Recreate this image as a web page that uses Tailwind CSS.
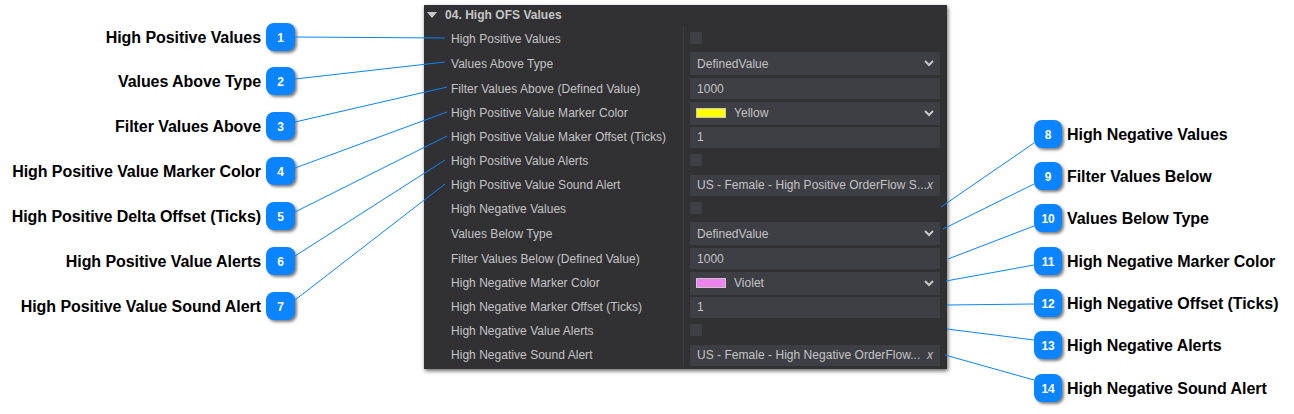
<!DOCTYPE html>
<html lang="en">
<head>
    <meta charset="UTF-8">
    <title>High OFS Values</title>
    <script src="https://cdn.jsdelivr.net/npm/@tailwindcss/browser@4"></script>
</head>
<body class="bg-white font-['Liberation_Sans',Arial,sans-serif]">
    <div class="relative w-[1294px] h-[414px] overflow-hidden flex">

        <!-- Left callouts -->
        <div class="w-[295px] pt-[22.6px] flex flex-col gap-[16.83px] items-end text-[16px] font-bold text-black tracking-[-0.06px]">
            <div class="flex items-center gap-[5px] h-[28px]"><span class="mt-[2px]">High Positive Values</span><span class="w-[29px] h-[28px] pt-[2px] rounded-lg bg-[#0a84ff] text-white text-[12px] flex items-center justify-center shadow-[2px_2px_3px_rgba(0,0,0,0.5)]">1</span></div>
            <div class="flex items-center gap-[5px] h-[28px]"><span class="mt-[2px]">Values Above Type</span><span class="w-[29px] h-[28px] pt-[2px] rounded-lg bg-[#0a84ff] text-white text-[12px] flex items-center justify-center shadow-[2px_2px_3px_rgba(0,0,0,0.5)]">2</span></div>
            <div class="flex items-center gap-[5px] h-[28px]"><span class="mt-[2px]">Filter Values Above</span><span class="w-[29px] h-[28px] pt-[2px] rounded-lg bg-[#0a84ff] text-white text-[12px] flex items-center justify-center shadow-[2px_2px_3px_rgba(0,0,0,0.5)]">3</span></div>
            <div class="flex items-center gap-[5px] h-[28px]"><span class="mt-[2px]">High Positive Value Marker Color</span><span class="w-[29px] h-[28px] pt-[2px] rounded-lg bg-[#0a84ff] text-white text-[12px] flex items-center justify-center shadow-[2px_2px_3px_rgba(0,0,0,0.5)]">4</span></div>
            <div class="flex items-center gap-[5px] h-[28px]"><span class="mt-[2px]">High Positive Delta Offset (Ticks)</span><span class="w-[29px] h-[28px] pt-[2px] rounded-lg bg-[#0a84ff] text-white text-[12px] flex items-center justify-center shadow-[2px_2px_3px_rgba(0,0,0,0.5)]">5</span></div>
            <div class="flex items-center gap-[5px] h-[28px]"><span class="mt-[2px]">High Positive Value Alerts</span><span class="w-[29px] h-[28px] pt-[2px] rounded-lg bg-[#0a84ff] text-white text-[12px] flex items-center justify-center shadow-[2px_2px_3px_rgba(0,0,0,0.5)]">6</span></div>
            <div class="flex items-center gap-[5px] h-[28px]"><span class="mt-[2px]">High Positive Value Sound Alert</span><span class="w-[29px] h-[28px] pt-[2px] rounded-lg bg-[#0a84ff] text-white text-[12px] flex items-center justify-center shadow-[2px_2px_3px_rgba(0,0,0,0.5)]">7</span></div>
        </div>

        <!-- Panel -->
        <div class="ml-[129px] mt-[5px] w-[523px] h-[364px] bg-[#313134] shadow-[1px_2px_4px_rgba(0,0,0,0.6)] text-[12px] text-[#c4c4c4] tracking-[0.03px]">
            <div class="h-[21px] flex items-center pl-[3px] pb-[1px]">
                <svg width="10" height="6" viewBox="0 0 10 6" class="mr-[8px]"><path d="M0 0h10L5 6z" fill="#c8c8c8"/></svg>
                <span class="font-bold text-[#c6c6c6]">04. High OFS Values</span>
            </div>
            <div class="grid grid-cols-[259px_264px]">
                <div class="h-[25px] pl-[27px] flex items-center">High Positive Values</div>
                <div class="h-[25px] flex items-center border-l border-[#3c3c40] pl-[6px]"><span class="w-[12px] h-[12px] -mt-[2px] bg-[#3e3e45]"></span></div>

                <div class="h-[25px] pl-[27px] flex items-center">Values Above Type</div>
                <div class="h-[25px] flex items-center border-l border-[#3c3c40] pl-[6px]"><div class="w-[250px] h-[23px] bg-[#3e3e45] flex items-center justify-between pl-[7px] pr-[6px]"><span>DefinedValue</span><svg width="10" height="7" viewBox="0 0 10 7"><path d="M1 1l4 4 4-4" fill="none" stroke="#c8c8c8" stroke-width="2"/></svg></div></div>

                <div class="h-[25px] pl-[27px] flex items-center">Filter Values Above (Defined Value)</div>
                <div class="h-[25px] flex items-center border-l border-[#3c3c40] pl-[6px]"><div class="w-[250px] h-[21px] bg-[#3e3e45] flex items-center pl-[7px]">1000</div></div>

                <div class="h-[24px] pl-[27px] flex items-center">High Positive Value Marker Color</div>
                <div class="h-[24px] flex items-center border-l border-[#3c3c40] pl-[6px]"><div class="w-[250px] h-[23px] bg-[#3e3e45] flex items-center pl-[6px] pr-[6px]"><span class="w-[30px] h-[10px] bg-[#ffff00] border border-[#c8c8c8] mr-[8px]"></span><span>Yellow</span><svg class="ml-auto" width="10" height="7" viewBox="0 0 10 7"><path d="M1 1l4 4 4-4" fill="none" stroke="#c8c8c8" stroke-width="2"/></svg></div></div>

                <div class="h-[24px] pl-[27px] flex items-center">High Positive Value Maker Offset (Ticks)</div>
                <div class="h-[24px] flex items-center border-l border-[#3c3c40] pl-[6px]"><div class="w-[250px] h-[21px] bg-[#3e3e45] flex items-center pl-[7px]">1</div></div>

                <div class="h-[24px] pl-[27px] flex items-center">High Positive Value Alerts</div>
                <div class="h-[24px] flex items-center border-l border-[#3c3c40] pl-[6px]"><span class="w-[12px] h-[12px] -mt-[2px] bg-[#3e3e45]"></span></div>

                <div class="h-[24px] pl-[27px] flex items-center">High Positive Value Sound Alert</div>
                <div class="h-[24px] flex items-center border-l border-[#3c3c40] pl-[6px]"><div class="w-[250px] h-[21px] bg-[#3e3e45] flex items-center justify-between pl-[7px] pr-[7px] whitespace-nowrap"><span>US - Female - High Positive OrderFlow S...</span><i>x</i></div></div>

                <div class="h-[24px] pl-[27px] flex items-center">High Negative Values</div>
                <div class="h-[24px] flex items-center border-l border-[#3c3c40] pl-[6px]"><span class="w-[12px] h-[12px] -mt-[2px] bg-[#3e3e45]"></span></div>

                <div class="h-[25px] pl-[27px] flex items-center">Values Below Type</div>
                <div class="h-[25px] flex items-center border-l border-[#3c3c40] pl-[6px]"><div class="w-[250px] h-[23px] bg-[#3e3e45] flex items-center justify-between pl-[7px] pr-[6px]"><span>DefinedValue</span><svg width="10" height="7" viewBox="0 0 10 7"><path d="M1 1l4 4 4-4" fill="none" stroke="#c8c8c8" stroke-width="2"/></svg></div></div>

                <div class="h-[25px] pl-[27px] flex items-center">Filter Values Below (Defined Value)</div>
                <div class="h-[25px] flex items-center border-l border-[#3c3c40] pl-[6px]"><div class="w-[250px] h-[21px] bg-[#3e3e45] flex items-center pl-[7px]">1000</div></div>

                <div class="h-[24px] pl-[27px] flex items-center">High Negative Marker Color</div>
                <div class="h-[24px] flex items-center border-l border-[#3c3c40] pl-[6px]"><div class="w-[250px] h-[23px] bg-[#3e3e45] flex items-center pl-[6px] pr-[6px]"><span class="w-[30px] h-[10px] bg-[#ee82ee] border border-[#c8c8c8] mr-[8px]"></span><span>Violet</span><svg class="ml-auto" width="10" height="7" viewBox="0 0 10 7"><path d="M1 1l4 4 4-4" fill="none" stroke="#c8c8c8" stroke-width="2"/></svg></div></div>

                <div class="h-[24px] pl-[27px] flex items-center">High Negative Marker Offset (Ticks)</div>
                <div class="h-[24px] flex items-center border-l border-[#3c3c40] pl-[6px]"><div class="w-[250px] h-[21px] bg-[#3e3e45] flex items-center pl-[7px]">1</div></div>

                <div class="h-[24px] pl-[27px] flex items-center">High Negative Value Alerts</div>
                <div class="h-[24px] flex items-center border-l border-[#3c3c40] pl-[6px]"><span class="w-[12px] h-[12px] -mt-[2px] bg-[#3e3e45]"></span></div>

                <div class="h-[24px] pl-[27px] flex items-center">High Negative Sound Alert</div>
                <div class="h-[24px] flex items-center border-l border-[#3c3c40] pl-[6px]"><div class="w-[250px] h-[21px] bg-[#3e3e45] flex items-center justify-between pl-[7px] pr-[7px] whitespace-nowrap"><span>US - Female - High Negative OrderFlow...</span><i>x</i></div></div>
            </div>
        </div>

        <!-- Right callouts -->
        <div class="ml-[87px] pt-[119.6px] flex flex-col gap-[14.33px] text-[16px] font-bold text-black tracking-[-0.06px]">
            <div class="flex items-center gap-[5px] h-[28px]"><span class="w-[28px] h-[28px] pt-[2px] rounded-lg bg-[#0a84ff] text-white text-[12px] flex items-center justify-center shadow-[2px_2px_3px_rgba(0,0,0,0.5)]">8</span><span class="whitespace-nowrap mt-[2px]">High Negative Values</span></div>
            <div class="flex items-center gap-[5px] h-[28px]"><span class="w-[28px] h-[28px] pt-[2px] rounded-lg bg-[#0a84ff] text-white text-[12px] flex items-center justify-center shadow-[2px_2px_3px_rgba(0,0,0,0.5)]">9</span><span class="whitespace-nowrap mt-[2px]">Filter Values Below</span></div>
            <div class="flex items-center gap-[5px] h-[28px]"><span class="w-[28px] h-[28px] pt-[2px] rounded-lg bg-[#0a84ff] text-white text-[12px] flex items-center justify-center shadow-[2px_2px_3px_rgba(0,0,0,0.5)]">10</span><span class="whitespace-nowrap mt-[2px]">Values Below Type</span></div>
            <div class="flex items-center gap-[5px] h-[28px]"><span class="w-[28px] h-[28px] pt-[2px] rounded-lg bg-[#0a84ff] text-white text-[12px] flex items-center justify-center shadow-[2px_2px_3px_rgba(0,0,0,0.5)]">11</span><span class="whitespace-nowrap mt-[2px]">High Negative Marker Color</span></div>
            <div class="flex items-center gap-[5px] h-[28px]"><span class="w-[28px] h-[28px] pt-[2px] rounded-lg bg-[#0a84ff] text-white text-[12px] flex items-center justify-center shadow-[2px_2px_3px_rgba(0,0,0,0.5)]">12</span><span class="whitespace-nowrap mt-[2px]">High Negative Offset (Ticks)</span></div>
            <div class="flex items-center gap-[5px] h-[28px]"><span class="w-[28px] h-[28px] pt-[2px] rounded-lg bg-[#0a84ff] text-white text-[12px] flex items-center justify-center shadow-[2px_2px_3px_rgba(0,0,0,0.5)]">13</span><span class="whitespace-nowrap mt-[2px]">High Negative Alerts</span></div>
            <div class="flex items-center gap-[5px] h-[28px]"><span class="w-[28px] h-[28px] pt-[2px] rounded-lg bg-[#0a84ff] text-white text-[12px] flex items-center justify-center shadow-[2px_2px_3px_rgba(0,0,0,0.5)]">14</span><span class="whitespace-nowrap mt-[2px]">High Negative Sound Alert</span></div>
        </div>

        <!-- Leader lines -->
        <svg class="absolute inset-0 pointer-events-none" width="1294" height="414" stroke="#0a84ff" stroke-width="1" fill="none">
            <path d="M295 37L445 38"/>
            <path d="M295 79L445 62"/>
            <path d="M295 122L447 87"/>
            <path d="M295 168L447 112"/>
            <path d="M295 212L447 136"/>
            <path d="M295 256L445 160"/>
            <path d="M295 300L445 184"/>
            <path d="M1034 143L941 207"/>
            <path d="M1034 184L943 229"/>
            <path d="M1034 226L948 259"/>
            <path d="M1034 265L946 281"/>
            <path d="M1034 304L947 305"/>
            <path d="M1034 340L947 329"/>
            <path d="M1034 380L945 355"/>
        </svg>
    </div>
</body>
</html>
